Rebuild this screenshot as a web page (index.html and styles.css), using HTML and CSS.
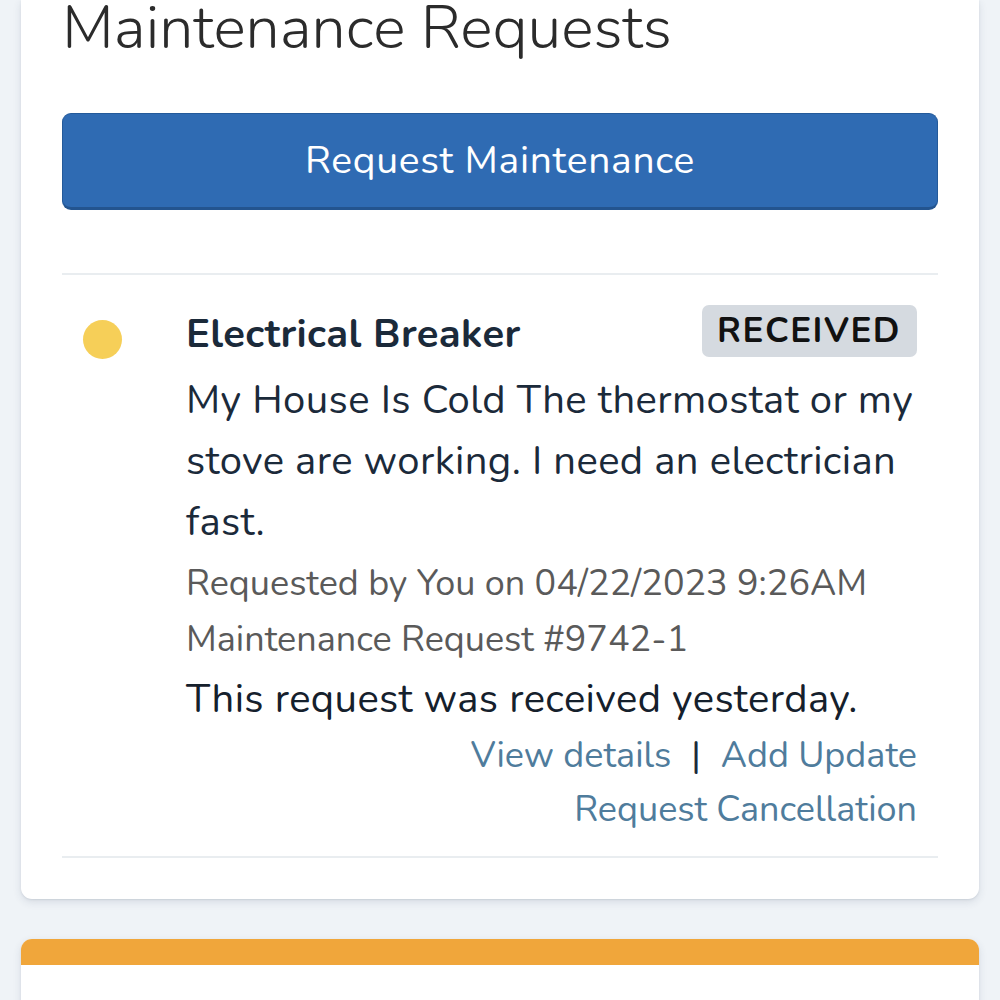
FILE: index.html
```html
<!DOCTYPE html>
<html lang="en">
<head>
<meta charset="utf-8">
<title>Maintenance Requests</title>
<link rel="stylesheet" href="styles.css">
</head>
<body>
<div class="page">
  <section class="card">
    <h1 class="title">Maintenance Requests</h1>
    <button class="btn-primary" type="button">Request Maintenance</button>
    <ul class="request-list">
      <li class="request">
        <div class="request-marker"><span class="dot"></span></div>
        <div class="request-body">
          <div class="request-head">
            <h2 class="request-title">Electrical Breaker</h2>
            <span class="badge">RECEIVED</span>
          </div>
          <p class="request-desc">My House Is Cold The thermostat or my stove are working. I need an electrician fast.</p>
          <p class="request-meta first">Requested by You on 04/22/2023 9:26AM</p>
          <p class="request-meta">Maintenance Request #9742-1</p>
          <p class="request-status">This request was received yesterday.</p>
          <div class="request-actions">
            <div class="action-row"><a href="#" class="link">View details</a><span class="sep">|</span><a href="#" class="link">Add Update</a></div>
            <div class="action-row"><a href="#" class="link">Request Cancellation</a></div>
          </div>
        </div>
      </li>
    </ul>
  </section>
  <section class="card card-warning">
    <div class="card-warning-bar"></div>
    <div class="card-warning-body"></div>
  </section>
</div>
</body>
</html>
```
FILE: styles.css
```css
* { box-sizing: border-box; }
html, body { margin: 0; padding: 0; }
body {
  background: #eff3f7;
  font-family: "Nunito", Lato, "Open Sans", sans-serif;
  color: #1b2a3a;
  height: 1000px;
  overflow: hidden;
}
.page {
  padding: 0 21px;
  display: flex;
  flex-direction: column;
  gap: 40px;
}
.card {
  background: #fff;
  border-radius: 0 0 11px 11px;
  box-shadow: 0 3px 8px rgba(40, 60, 90, 0.12), 0 1px 2px rgba(40, 60, 90, 0.10);
  padding: 0 41px 41px;
}
.title {
  margin: 0;
  font-weight: 300;
  font-size: 61px;
  line-height: 57px;
  color: #2b2b2b;
  white-space: nowrap;
}
.btn-primary {
  display: block;
  width: 100%;
  height: 97px;
  margin-top: 56px;
  background: #2f6bb3;
  color: #fff;
  border: 1px solid #245a9a;
  border-bottom: 3px solid #23548f;
  border-radius: 9px;
  font-family: inherit;
  font-size: 39px;
  font-weight: 400;
  letter-spacing: 0.7px;
  padding: 0;
}
.request-list {
  list-style: none;
  margin: 63px 0 0;
  padding: 0;
  border-top: 2px solid #e9edf0;
}
.request {
  display: grid;
  grid-template-columns: 124px 1fr;
  padding: 30px 21px 19px 0;
  border-bottom: 2px solid #e9edf0;
}
.request-marker {
  padding-left: 21px;
  padding-top: 15px;
}
.dot {
  display: block;
  width: 39px;
  height: 39px;
  border-radius: 50%;
  background: #f6cf58;
}
.request-head {
  display: flex;
  justify-content: space-between;
  align-items: flex-start;
}
.request-title {
  margin: 3px 0 0;
  font-size: 40px;
  line-height: 52px;
  font-weight: 700;
  color: #1b2a3a;
  letter-spacing: 0.4px;
}
.badge {
  background: #d5dae0;
  color: #111;
  font-weight: 700;
  font-size: 35px;
  line-height: 52px;
  height: 52px;
  padding: 0 16px 0 15px;
  border-radius: 7px;
  letter-spacing: 1.5px;
}
.request-desc {
  margin: 10px 0 0;
  font-size: 40px;
  line-height: 61px;
  color: #1b2a3a;
  letter-spacing: 0.4px;
}
.request-meta {
  margin: 0;
  font-size: 36px;
  line-height: 56px;
  color: #5a5a5a;
}
.request-meta.first { margin-top: 3px; }
.request-status {
  margin: 0;
  font-size: 40px;
  line-height: 62px;
  color: #15202c;
  letter-spacing: 0.4px;
}
.request-actions {
  display: flex;
  flex-direction: column;
  align-items: flex-end;
  margin-top: -1px;
}
.action-row {
  font-size: 36px;
  line-height: 54px;
  display: flex;
  align-items: center;
}
.link {
  color: #4f7c9c;
  text-decoration: none;
}
.sep {
  color: #1b2a3a;
  margin: 0 20px;
}
.card-warning {
  border-radius: 11px 11px 0 0;
  padding: 0;
  overflow: hidden;
}
.card-warning-bar {
  height: 26px;
  background: #f0a63b;
}
.card-warning-body {
  height: 200px;
}
```
